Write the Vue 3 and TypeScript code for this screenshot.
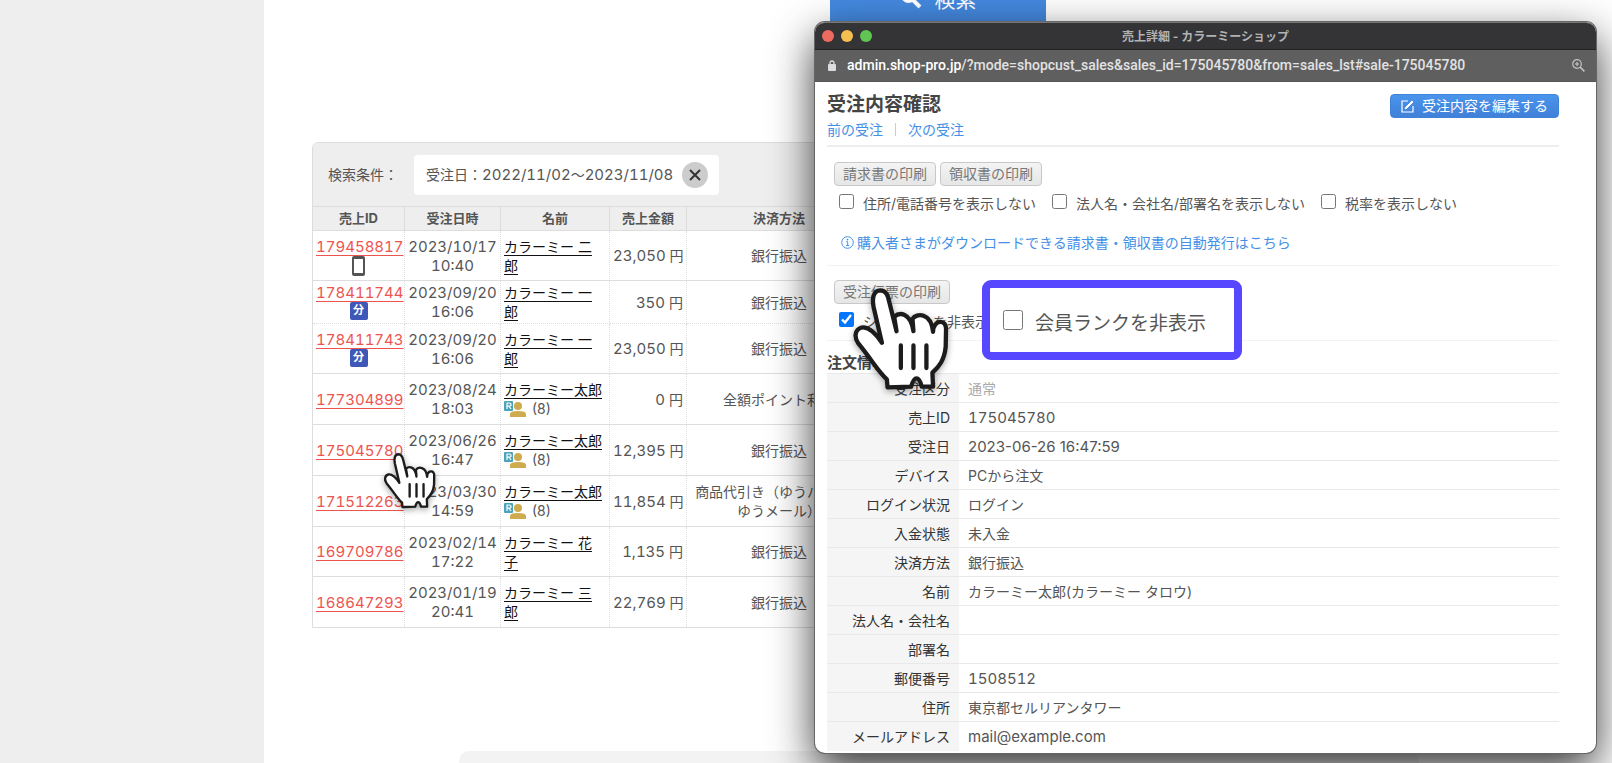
<script setup lang="ts">
import { ref } from 'vue'

type Mark = 'phone' | 'split' | 'none'

interface Sale {
  id: string
  mark: Mark
  date: string
  time: string
  name: string
  orders?: number
  amount: string
  payment: string[]
  grouped?: boolean
}

interface Detail {
  label: string
  value: string
  kind?: 'latin' | 'date' | 'muted'
}

const sales: Sale[] = [
  { id: '179458817', mark: 'phone', date: '2023/10/17', time: '10:40', name: 'カラーミー 二郎', amount: '23,050', payment: ['銀行振込'] },
  { id: '178411744', mark: 'split', date: '2023/09/20', time: '16:06', name: 'カラーミー 一郎', amount: '350', payment: ['銀行振込'], grouped: true },
  { id: '178411743', mark: 'split', date: '2023/09/20', time: '16:06', name: 'カラーミー 一郎', amount: '23,050', payment: ['銀行振込'] },
  { id: '177304899', mark: 'none', date: '2023/08/24', time: '18:03', name: 'カラーミー太郎', orders: 8, amount: '0', payment: ['全額ポイント利用'] },
  { id: '175045780', mark: 'none', date: '2023/06/26', time: '16:47', name: 'カラーミー太郎', orders: 8, amount: '12,395', payment: ['銀行振込'] },
  { id: '171512263', mark: 'none', date: '2023/03/30', time: '14:59', name: 'カラーミー太郎', orders: 8, amount: '11,854', payment: ['商品代引き（ゆうパック・', 'ゆうメール）'] },
  { id: '169709786', mark: 'none', date: '2023/02/14', time: '17:22', name: 'カラーミー 花子', amount: '1,135', payment: ['銀行振込'] },
  { id: '168647293', mark: 'none', date: '2023/01/19', time: '20:41', name: 'カラーミー 三郎', amount: '22,769', payment: ['銀行振込'] },
]

const details: Detail[] = [
  { label: '受注区分', value: '通常', kind: 'muted' },
  { label: '売上ID', value: '175045780', kind: 'latin' },
  { label: '受注日', value: '2023-06-26 16:47:59', kind: 'date' },
  { label: 'デバイス', value: 'PCから注文' },
  { label: 'ログイン状況', value: 'ログイン' },
  { label: '入金状態', value: '未入金' },
  { label: '決済方法', value: '銀行振込' },
  { label: '名前', value: 'カラーミー太郎(カラーミー タロウ)' },
  { label: '法人名・会社名', value: '' },
  { label: '部署名', value: '' },
  { label: '郵便番号', value: '1508512', kind: 'latin' },
  { label: '住所', value: '東京都セルリアンタワー' },
  { label: 'メールアドレス', value: 'mail@example.com', kind: 'latin' },
]

const options = ref([
  { id: 'hide-address', label: '住所/電話番号を表示しない', checked: false },
  { id: 'hide-company', label: '法人名・会社名/部署名を表示しない', checked: false },
  { id: 'hide-tax', label: '税率を表示しない', checked: false },
])
const hideShop = ref(true)
const hideRank = ref(false)

const handOutline =
  'M216 490 L191 382 C186 356 190 333 211 332 C230 332 235 350 239 370 L260 455 L253 412 C268 398 302 396 311 455 L308 418 C320 400 364 398 370 457 C370 420 412 416 409 452 L408 502 C404 542 388 562 368 580 L370 622 L336 622 C332 606 328 597 320 597 C312 597 308 608 304 622 L233 624 L231 600 C206 578 186 542 145 492 C132 474 134 450 155 444 C182 440 204 472 216 490 Z'
</script>

<template>
  <div class="page">
    <aside class="sidebar"></aside>

    <main class="main">
      <div class="search-area">
        <button class="search-button" type="button">
          <svg width="22" height="22" viewBox="0 0 22 22" aria-hidden="true">
            <circle cx="8.5" cy="8.5" r="6" fill="none" stroke="currentColor" stroke-width="3" />
            <path d="M13 13 L20 20" stroke="currentColor" stroke-width="4" />
          </svg>
          <span>検索</span>
        </button>
      </div>

      <section class="panel">
        <div class="filter">
          <span>検索条件：</span>
          <div class="chip">
            <span>受注日：<span class="latin">2022/11/02</span>〜<span class="latin">2023/11/08</span></span>
            <button class="clear" type="button" aria-label="条件を削除">
              <svg width="12" height="12" viewBox="0 0 12 12" aria-hidden="true">
                <path d="M1 1 L11 11 M11 1 L1 11" stroke="currentColor" stroke-width="2" />
              </svg>
            </button>
          </div>
        </div>

        <table class="sales">
          <colgroup>
            <col class="c-id" /><col class="c-date" /><col class="c-name" /><col class="c-amount" /><col />
          </colgroup>
          <thead>
            <tr>
              <th>売上ID</th>
              <th>受注日時</th>
              <th>名前</th>
              <th>売上金額</th>
              <th>決済方法</th>
            </tr>
          </thead>
          <tbody>
            <tr v-for="s in sales" :key="s.id" :class="{ grouped: s.grouped, ranked: s.orders }">
              <td class="center">
                <a class="sale-link latin" href="#">{{ s.id }}</a>
                <div v-if="s.mark === 'phone'" class="mark">
                  <svg width="13" height="20" viewBox="0 0 13 20" aria-hidden="true">
                    <path fill="#555" fill-rule="evenodd" d="M2 0H11Q13 0 13 2V18Q13 20 11 20H2Q0 20 0 18V2Q0 0 2 0ZM2 3V17H11V3Z" />
                  </svg>
                </div>
                <div v-else-if="s.mark === 'split'" class="mark"><span class="split">分</span></div>
              </td>
              <td class="center latin">{{ s.date }}<br />{{ s.time }}</td>
              <td class="name">
                <a href="#">{{ s.name }}</a>
                <div v-if="s.orders" class="rank">
                  <svg width="22" height="16" viewBox="0 0 22 16" aria-hidden="true">
                    <circle cx="14" cy="5" r="4" fill="#cfab4f" />
                    <path d="M6 16 V13 Q6 10 14 10 Q22 10 22 13 V16 Z" fill="#cfab4f" />
                    <rect width="9" height="10" rx="1" fill="#4aa3b8" />
                    <path d="M3 8 V2 H5 Q7 2 7 3.7 Q7 5.2 5 5.2 H3 M5 5.2 L7 8" fill="none" stroke="#fff" stroke-width="1.2" />
                  </svg>
                  <span>({{ s.orders }})</span>
                </div>
              </td>
              <td class="amount"><span class="latin">{{ s.amount }}</span> 円</td>
              <td class="center">
                <div v-for="line in s.payment" :key="line" class="payment">{{ line }}</div>
              </td>
            </tr>
          </tbody>
        </table>
      </section>

      <div class="footer-box"></div>
    </main>

    <section class="window">
      <header class="titlebar">
        <span class="lights"><i class="red"></i><i class="yellow"></i><i class="green"></i></span>
        <span class="title">売上詳細 - カラーミーショップ</span>
      </header>
      <div class="urlbar">
        <svg width="8" height="11" viewBox="0 0 8 11" aria-hidden="true">
          <rect y="4" width="8" height="7" rx="1" fill="#dcdce0" />
          <path d="M2 5 V3 Q2 1 4 1 Q6 1 6 3 V5" fill="none" stroke="#dcdce0" stroke-width="1.3" />
        </svg>
        <span class="url"><b>admin.shop-pro.jp</b>/?mode=shopcust_sales&amp;sales_id=175045780&amp;from=sales_lst#sale-175045780</span>
        <svg width="13" height="13" viewBox="0 0 13 13" fill="none" stroke="#c2c2c4" aria-hidden="true">
          <circle cx="5" cy="5" r="4.3" stroke-width="1.2" />
          <path d="M8 8 L12.4 12.4" stroke-width="1.6" />
          <path d="M5 3 V7 M3 5 H7" stroke-width="1.2" />
        </svg>
      </div>

      <div class="content">
        <div class="head">
          <div>
            <h1>受注内容確認</h1>
            <nav class="pager">
              <a href="#">前の受注</a>
              <i></i>
              <a href="#">次の受注</a>
            </nav>
          </div>
          <button class="edit" type="button">
            <svg width="13" height="13" viewBox="0 0 13 13" fill="none" stroke="#fff" aria-hidden="true">
              <path d="M7 1 H1 V12 H12 V6" stroke-width="1.2" />
              <path d="M4 9 L5 7 L11 1 L12 2 L6 8 Z" stroke-width="1" fill="#fff" />
            </svg>
            <span>受注内容を編集する</span>
          </button>
        </div>

        <div class="print-block invoices">
          <div class="buttons">
            <button class="grey" type="button">請求書の印刷</button>
            <button class="grey" type="button">領収書の印刷</button>
          </div>
          <div class="checks">
            <label v-for="o in options" :key="o.id" :for="o.id" class="check">
              <input :id="o.id" v-model="o.checked" type="checkbox" />
              <span>{{ o.label }}</span>
            </label>
          </div>
          <a class="info" href="#">
            <svg width="13" height="13" viewBox="0 0 13 13" aria-hidden="true">
              <circle cx="6.5" cy="6.5" r="5.8" fill="none" stroke="currentColor" />
              <path d="M5.2 5.7 H6.7 V9.6 M5 9.6 H8.3" fill="none" stroke="currentColor" />
              <circle cx="6.5" cy="3.6" r="0.9" fill="currentColor" />
            </svg>
            <span>購入者さまがダウンロードできる請求書・領収書の自動発行はこちら</span>
          </a>
        </div>

        <div class="print-block slip">
          <div class="buttons">
            <button class="grey" type="button">受注伝票の印刷</button>
          </div>
          <div class="checks">
            <label for="hide-shop" class="check">
              <input id="hide-shop" v-model="hideShop" type="checkbox" />
              <span>ショップ名を非表示</span>
            </label>
          </div>
        </div>

        <h2>注文情報</h2>
        <table class="details">
          <tbody>
            <tr v-for="d in details" :key="d.label">
              <th scope="row">{{ d.label }}</th>
              <td :class="d.kind">{{ d.value }}</td>
            </tr>
          </tbody>
        </table>
      </div>

      <label class="callout" for="hide-rank">
        <input id="hide-rank" v-model="hideRank" type="checkbox" />
        <span>会員ランクを非表示</span>
      </label>

      <svg class="hand large" viewBox="120 320 310 320" aria-hidden="true">
        <path :d="handOutline" />
        <path d="M273 498 V566 M311 498 V566 M350 498 V566" />
      </svg>
    </section>

    <svg class="hand small" viewBox="120 320 310 320" aria-hidden="true">
      <path :d="handOutline" />
      <path d="M273 498 V566 M311 498 V566 M350 498 V566" />
    </svg>
  </div>
</template>

<style>
body {
  margin: 0;
  overflow: hidden;
}
</style>

<style scoped>
* {
  box-sizing: border-box;
}
.page {
  position: relative;
  display: flex;
  height: 100vh;
  overflow: hidden;
  background: #fff;
  color: #555;
  font: 14px/19px Inter, "Noto Sans CJK JP", sans-serif;
}
button {
  font-family: inherit;
  cursor: pointer;
}
.latin {
  font-size: 15px;
  font-variant-numeric: tabular-nums;
}
.date {
  font-size: 15px;
}
.sidebar {
  flex: 0 0 264px;
  background: #eee;
}
.main {
  flex: 1;
  min-width: 0;
}
.search-area {
  display: flex;
  justify-content: center;
  height: 142px;
}
.search-button {
  display: flex;
  align-items: center;
  justify-content: center;
  gap: 13px;
  width: 216px;
  height: 64px;
  margin-top: -34px;
  border: 0;
  border-radius: 4px;
  background: #4489df;
  color: #fff;
  font-size: 21px;
}

/* Sales list */
.panel {
  max-width: 560px;
  margin-left: 48px;
  border: 1px solid #ddd;
  border-radius: 6px 6px 0 0;
}
.filter {
  display: flex;
  align-items: center;
  gap: 16px;
  height: 63px;
  padding-left: 15px;
  border-radius: 5px 5px 0 0;
  background: #eee;
}
.chip {
  display: flex;
  align-items: center;
  gap: 9px;
  height: 40px;
  padding: 0 11px 0 12px;
  border-radius: 4px;
  background: #fff;
}
.clear {
  display: flex;
  align-items: center;
  justify-content: center;
  width: 26px;
  height: 26px;
  padding: 0;
  border: 0;
  border-radius: 50%;
  background: #ccc;
  color: #333;
}
.sales {
  width: 100%;
  table-layout: fixed;
  border-collapse: separate;
  border-spacing: 0;
}
.c-id {
  width: 92px;
}
.c-date {
  width: 96px;
}
.c-name {
  width: 109px;
}
.c-amount {
  width: 77px;
}
.sales th {
  height: 25px;
  padding: 0;
  border-top: 1px solid #ddd;
  border-bottom: 1px solid #ddd;
  border-right: 1px solid #ddd;
  background: #eee;
  font-size: 13px;
  font-weight: 700;
}
.sales td {
  height: 50px;
  padding: 0 3px;
  border-bottom: 1px solid #ddd;
  border-right: 1px dotted #ddd;
  vertical-align: middle;
}
.sales .ranked td {
  height: 51px;
}
.sales .grouped td {
  height: 43px;
  border-bottom: 1px dotted #ddd;
}
.sales th:last-child,
.sales td:last-child {
  border-right: 0;
}
.sales tr:last-child td {
  border-bottom: 0;
}
.sales .name {
  padding-right: 6px;
}
.center {
  text-align: center;
}
.sales a {
  text-underline-offset: 3px;
}
.sale-link {
  color: #ee544f;
}
.mark {
  display: flex;
  justify-content: center;
  height: 19px;
}
.split {
  width: 18px;
  height: 18px;
  border-radius: 2px;
  background: #3f57b7;
  color: #fff;
  font-size: 11px;
  font-weight: 700;
  line-height: 17px;
}
.name a {
  color: #111;
}
.rank {
  display: flex;
  align-items: center;
  gap: 6px;
}
.sales .amount {
  text-align: right;
  white-space: nowrap;
}
.payment {
  white-space: nowrap;
}
.footer-box {
  height: 40px;
  margin: 123px 193px 0 195px;
  border-radius: 10px;
  background: #f3f3f3;
}

/* Browser window */
.window {
  position: absolute;
  top: 22px;
  right: 16px;
  bottom: 10px;
  left: 815px;
  border-radius: 10px;
  background: #fff;
  box-shadow: 0 0 0 1px #666, 0 16px 44px rgba(0, 0, 0, 0.8);
}
.titlebar {
  display: flex;
  align-items: center;
  justify-content: center;
  position: relative;
  height: 27px;
  border-top: 1px solid #777;
  border-radius: 10px 10px 0 0;
  background: #343437;
  color: #b2b2b5;
  font-size: 12px;
  font-weight: 700;
}
.lights {
  position: absolute;
  left: 7px;
  display: flex;
  gap: 7px;
}
.lights i {
  width: 12px;
  height: 12px;
  border-radius: 50%;
}
.red {
  background: #ed6a5e;
}
.yellow {
  background: #f5bf4f;
}
.green {
  background: #61c554;
}
.urlbar {
  display: flex;
  align-items: center;
  height: 33px;
  padding: 0 11px 0 13px;
  border-top: 1px solid #222;
  border-bottom: 1px solid #555;
  background: #5f5f5f;
  color: #e2e2e2;
}
.url {
  flex: 1;
  margin-left: 11px;
  font-family: Roboto, sans-serif;
  font-size: 14px;
  font-weight: 500;
  white-space: nowrap;
}
.url b {
  color: #fff;
  font-weight: 500;
}
.content {
  height: calc(100% - 60px);
  padding: 0 37px 0 12px;
  overflow: hidden;
}
.head {
  display: flex;
  align-items: flex-start;
  justify-content: space-between;
  height: 65px;
  padding-top: 12px;
  border-bottom: 2px solid #eee;
}
h1 {
  margin: 0;
  color: #444;
  font-size: 19px;
  line-height: 22px;
}
.pager {
  display: flex;
  align-items: center;
  gap: 12px;
  margin-top: 4px;
}
.pager i {
  width: 1px;
  height: 13px;
  background: #ccc;
}
.pager a,
.info {
  color: #4490e6;
  text-decoration: none;
}
.edit {
  display: flex;
  align-items: center;
  gap: 8px;
  height: 24px;
  padding: 0 10px;
  border: 1px solid #3f82d6;
  border-radius: 4px;
  background: linear-gradient(#4a94ec, #4080d8);
  color: #fff;
  font-size: 14px;
  line-height: 20px;
}
.print-block {
  border-bottom: 1px solid #f3f3f3;
}
.invoices {
  height: 119px;
  padding-top: 15px;
}
.slip {
  height: 75px;
  padding-top: 14px;
}
.buttons {
  display: flex;
  gap: 4px;
  padding-left: 7px;
}
.grey {
  height: 24px;
  padding: 0 8px;
  border: 1px solid #c8c8c8;
  border-radius: 4px;
  background: linear-gradient(#f4f4f4, #e6e6e6);
  color: #777;
  font-size: 14px;
  line-height: 20px;
}
.checks {
  display: flex;
  gap: 16px;
  padding: 8px 0 0 12px;
}
.check {
  display: flex;
  align-items: flex-start;
  gap: 9px;
  white-space: nowrap;
}
.check input {
  width: 15px;
  height: 15px;
  margin: 0;
}
.info {
  display: flex;
  align-items: center;
  gap: 3px;
  margin: 20px 0 0 14px;
}
h2 {
  margin: 12px 0 0;
  color: #444;
  font-size: 15px;
  line-height: 20px;
}
.details {
  width: 100%;
  border-collapse: collapse;
}
.details tr {
  height: 29px;
  border-top: 1px solid #e9e9e9;
}
.details th {
  width: 132px;
  padding: 0 9px 0 0;
  background: #f5f5f5;
  color: #333;
  font-weight: 400;
  text-align: right;
}
.details td {
  padding: 0 0 0 9px;
}
.details .muted {
  color: #aaa;
}
.callout {
  position: absolute;
  top: 258px;
  left: 167px;
  display: flex;
  align-items: baseline;
  gap: 12px;
  height: 80px;
  padding: 22px 28px 0 13px;
  border: 8px solid #5748ff;
  border-radius: 9px;
  background: #fff;
  color: #555;
  font-size: 19px;
  white-space: nowrap;
}
.callout input {
  width: 20px;
  height: 20px;
  margin: 0;
}
.hand {
  position: absolute;
  fill: #fff;
  stroke: #1c1c1c;
  stroke-width: 13px;
  stroke-linecap: round;
  stroke-linejoin: round;
  filter: drop-shadow(0 2px 3px rgba(0, 0, 0, 0.35));
}
.large {
  top: 264px;
  left: 35px;
  width: 103px;
  height: 107px;
}
.small {
  top: 452px;
  left: 382px;
  width: 56px;
  height: 58px;
}
</style>
